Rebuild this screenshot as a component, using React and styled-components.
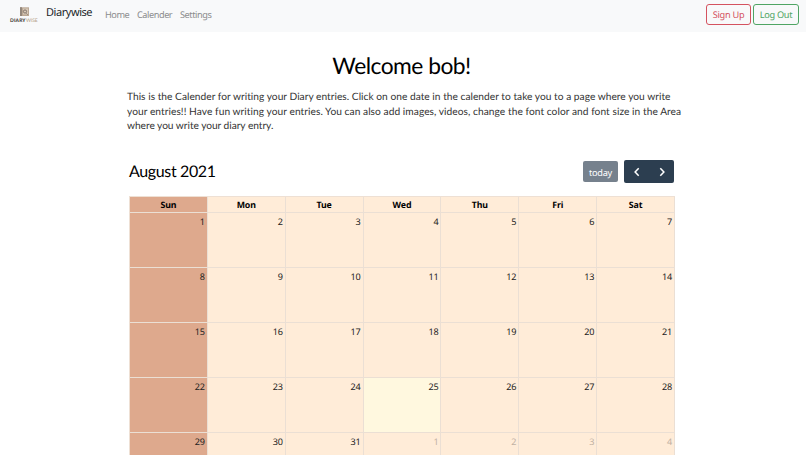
import React from "react";
import styled, { createGlobalStyle } from "styled-components";

const GlobalStyle = createGlobalStyle`
  * {
    box-sizing: border-box;
  }

  body {
    margin: 0;
    height: 455px;
    overflow: hidden;
    background: #fff;
    color: #212529;
    font-family: "Noto Sans", "Open Sans", sans-serif;
    text-rendering: geometricPrecision;
  }

  #root {
    height: 455px;
    overflow: hidden;
  }

  button {
    text-rendering: inherit;
  }
`;

const Nav = styled.nav`
  display: flex;
  align-items: flex-start;
  height: 32px;
  padding: 4px 7px 0 9px;
  background: #f8f9fa;
`;

const Logo = styled.a`
  display: flex;
  width: 30px;
  margin-top: 3px;
`;

const Brand = styled.a`
  width: 59px;
  margin-left: 7px;
  color: #212529;
  font-size: 11px;
  line-height: 17px;
  letter-spacing: -0.45px;
`;

const NavLink = styled.a`
  width: ${({ $width }) => $width};
  color: #8b8c8d;
  font-size: 9.2px;
  line-height: 22px;
  letter-spacing: -0.45px;
  white-space: nowrap;
`;

const Actions = styled.div`
  display: flex;
  gap: 2px;
  margin-left: auto;
`;

const OutlineButton = styled.button`
  width: ${({ $width }) => $width};
  height: 21px;
  padding: 0;
  border: 1px solid ${({ $color }) => $color};
  border-radius: 3px;
  background: transparent;
  color: ${({ $color }) => $color};
  font: 9.2px "Noto Sans", sans-serif;
  letter-spacing: -0.28px;
  white-space: nowrap;
`;

const Page = styled.main`
  width: 556px;
  margin-left: 127px;
`;

const Welcome = styled.h1`
  margin: 0;
  padding: 17px 7px 0 0;
  color: #000;
  font: 400 22.8px/32px Lato, sans-serif;
  letter-spacing: -0.52px;
  text-align: center;
`;

const Intro = styled.p`
  margin: 9px 0 0;
  color: #333;
  font: 400 10.2px/14.6px Lato, sans-serif;
`;

const Line = styled.span`
  display: block;
  white-space: nowrap;
  letter-spacing: ${({ $spacing }) => $spacing};
`;

const Calendar = styled.section`
  width: 546px;
  margin: 26px 0 0 2px;
`;

const Toolbar = styled.div`
  display: flex;
  align-items: center;
  justify-content: space-between;
  height: 23px;
  padding-right: 1px;
`;

const Month = styled.h2`
  margin: 0;
  padding-top: 1px;
  color: #000;
  font: 400 16px/23px Lato, sans-serif;
  letter-spacing: -0.36px;
`;

const ToolbarButtons = styled.div`
  display: flex;
  align-items: center;
  gap: 6px;
`;

const TodayButton = styled.button`
  width: 35px;
  height: 21px;
  padding: 2px 0 0;
  border: 0;
  border-radius: 2px;
  background: #76818d;
  color: #fff;
  font: 9.2px "Noto Sans", sans-serif;
  letter-spacing: -0.3px;
`;

const ArrowGroup = styled.div`
  display: flex;
  width: 50px;
  height: 23px;
  border-radius: 2px;
  background: #2c3e50;
`;

const ArrowButton = styled.button`
  display: flex;
  flex: 1;
  align-items: center;
  justify-content: center;
  padding: 2px 0 0;
  border: 0;
  background: transparent;
`;

const Grid = styled.div`
  display: grid;
  grid-template-columns: repeat(7, 1fr);
  grid-template-rows: 16px repeat(5, 55px);
  margin-top: 13px;
  border-top: 1px solid #eee0d4;
  border-left: 1px solid #eee0d4;
`;

const DayHeader = styled.div`
  border-right: 1px solid #ebdfd4;
  border-bottom: 1px solid #ebdfd4;
  background: ${({ $sunday }) => ($sunday ? "#dea98d" : "#ffecd8")};
  color: #000;
  font-size: 8.8px;
  font-weight: 700;
  line-height: 17px;
  letter-spacing: -0.1px;
  text-align: center;
`;

const cellColor = ({ $sunday, $today }) => {
  if ($sunday) return "#dea98d";
  return $today ? "#fff8df" : "#ffecd8";
};

const DayCell = styled.div`
  padding: 2px 2px 0 0;
  border-right: 1px solid #ebdfd4;
  border-bottom: 1px solid #ebdfd4;
  background: ${cellColor};
  color: ${({ $other }) => ($other ? "#bfb1a3" : "#222")};
  font-size: 9.1px;
  line-height: 14px;
  letter-spacing: -0.2px;
  text-align: right;
`;

const weekDays = ["Sun", "Mon", "Tue", "Wed", "Thu", "Fri", "Sat"];

const days = Array.from({ length: 35 }, (_, i) => ({
  id: i,
  label: i < 31 ? i + 1 : i - 30,
  other: i >= 31,
}));

const intro = [
  {
    text: "This is the Calender for writing your Diary entries. Click on one date in the calender to take you to a page where you write",
    spacing: "0.02px",
  },
  {
    text: "your entries!! Have fun writing your entries. You can also add images, videos, change the font color and font size in the Area",
    spacing: "0.05px",
  },
  { text: "where you write your diary entry.", spacing: "-0.04px" },
];

const LogoArt = () => (
  <svg width="30" height="16" viewBox="0 0 30 16">
    <rect x="11" y="0.3" width="9" height="8.7" fill="#bba894" />
    <path d="M11 .3h2v8.7h-2z" fill="#93877b" />
    <rect x="14" y="1.5" width="5" height="6" fill="#d8c9b8" />
    <circle cx="16" cy="4.5" r="1.6" fill="none" stroke="#6e6259" strokeWidth=".8" />
    <path d="M17.2 6.2l1.6 1.6" stroke="#7c7066" strokeWidth=".7" />
    <text x="1" y="14.6" fontFamily="Lato, sans-serif" fontSize="4.9" fontWeight="900" fill="#444039" textLength="15.5">
      DIARY
    </text>
    <text x="17" y="14.6" fontFamily="Lato, sans-serif" fontSize="4.9" fill="#b5a186" textLength="11.5">
      WISE
    </text>
  </svg>
);

const Chevron = ({ next }) => (
  <svg width="8" height="10" viewBox="0 0 8 10">
    <path
      d={next ? "M2.3 1.2L5.9 5 2.3 8.8" : "M5.7 1.2L2.1 5l3.6 3.8"}
      fill="none"
      stroke="#fff"
      strokeWidth="1.5"
    />
  </svg>
);

const App = () => {
  return (
    <>
      <GlobalStyle />
      <Nav>
        <Logo>
          <LogoArt />
        </Logo>
        <Brand>Diarywise</Brand>
        <NavLink $width="32px">Home</NavLink>
        <NavLink $width="43px">Calender</NavLink>
        <NavLink $width="34px">Settings</NavLink>
        <Actions>
          <OutlineButton $color="#d4525f" $width="45px">
            Sign Up
          </OutlineButton>
          <OutlineButton $color="#4fa564" $width="46px">
            Log Out
          </OutlineButton>
        </Actions>
      </Nav>

      <Page>
        <Welcome>Welcome bob!</Welcome>
        <Intro>
          {intro.map(({ text, spacing }) => (
            <Line key={text} $spacing={spacing}>
              {text}
            </Line>
          ))}
        </Intro>

        <Calendar>
          <Toolbar>
            <Month>August 2021</Month>
            <ToolbarButtons>
              <TodayButton>today</TodayButton>
              <ArrowGroup>
                <ArrowButton aria-label="prev">
                  <Chevron />
                </ArrowButton>
                <ArrowButton aria-label="next">
                  <Chevron next />
                </ArrowButton>
              </ArrowGroup>
            </ToolbarButtons>
          </Toolbar>

          <Grid>
            {weekDays.map((day) => (
              <DayHeader key={day} $sunday={day === "Sun"}>
                {day}
              </DayHeader>
            ))}
            {days.map(({ id, label, other }) => (
              <DayCell
                key={id}
                $sunday={id % 7 === 0}
                $today={label === 25}
                $other={other}
              >
                {label}
              </DayCell>
            ))}
          </Grid>
        </Calendar>
      </Page>
    </>
  );
};

export default App;
